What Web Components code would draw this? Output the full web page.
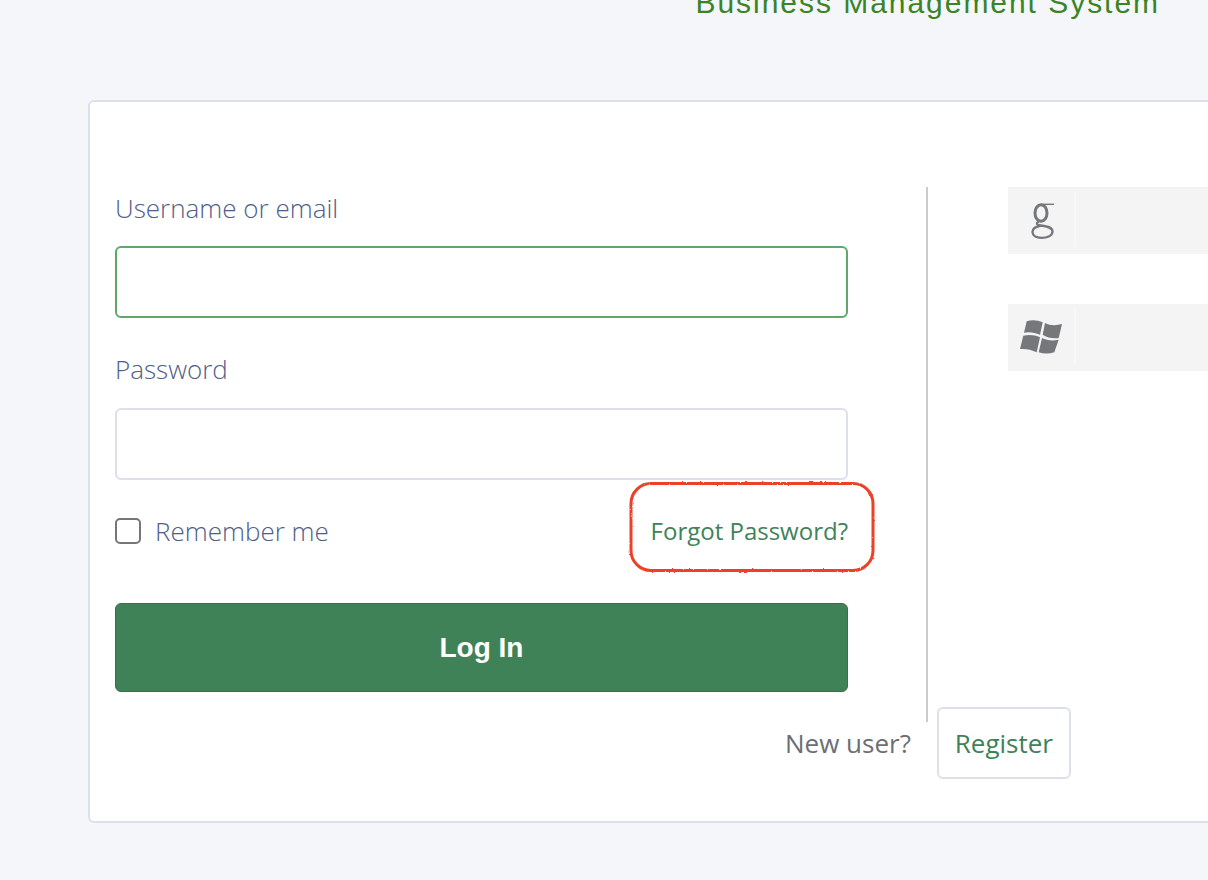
<!DOCTYPE html>
<html>
<head>
<meta charset="utf-8">
<title>Log in</title>
<style>
    html, body {
        margin: 0;
        height: 880px;
        overflow: hidden;
        background: #f4f6fa;
        font-family: "Open Sans", "Liberation Sans", sans-serif;
    }
</style>
</head>
<body>
<login-page>
    <login-card>
        <login-form slot="form"></login-form>
        <social-button slot="social" provider="google"></social-button>
        <social-button slot="social" provider="windows"></social-button>
        <register-prompt slot="footer"></register-prompt>
    </login-card>
</login-page>

<script>
function define(name, markup) {
    customElements.define(name, class extends HTMLElement {
        constructor() {
            super();
            this.attachShadow({ mode: 'open' });
            const template = document.createElement('template');
            template.innerHTML = typeof markup === 'function' ? markup(this) : markup;
            this.shadowRoot.appendChild(template.content.cloneNode(true));
        }
    });
}

define('login-page', `
    <style>
        :host { display: block; width: 1208px; height: 880px; overflow: hidden; }
        header {
            height: 100px;
            box-sizing: border-box;
            padding-right: 48px;
            text-align: right;
            font: 30px/30px "Liberation Sans", Arial, sans-serif;
            letter-spacing: 1.96px;
            color: #3a8425;
            margin-top: -12px;
            margin-bottom: 12px;
            white-space: nowrap;
        }
        main { padding-left: 88px; }
    </style>
    <header>Business Management System</header>
    <main><slot></slot></main>
`);

define('login-card', `
    <style>
        :host {
            display: block;
            width: 1300px;
            height: 723px;
            box-sizing: border-box;
            background: #fff;
            border: 2px solid #dde0ea;
            border-radius: 6px;
            padding: 85px 0 0 25px;
        }
        .columns { display: flex; height: 535px; }
        .form { flex: 0 0 733px; margin-right: 78px; }
        .social {
            flex: 1;
            border-left: 2px solid #cccccc;
            padding-left: 80px;
            display: flex;
            flex-direction: column;
            gap: 50px;
        }
        .footer { margin: -15px 0 0 0; }
    </style>
    <div class="columns">
        <div class="form"><slot name="form"></slot></div>
        <div class="social"><slot name="social"></slot></div>
    </div>
    <div class="footer"><slot name="footer"></slot></div>
`);

define('text-field', el => `
    <style>
        :host { display: block; margin-bottom: 31px; }
        label {
            display: block;
            font: 300 26px/43px "Open Sans", sans-serif;
            color: #4f6088;
            margin-bottom: 16px;
        }
        :host(:not([active])) label { margin-top: -1px; margin-bottom: 17px; }
        input {
            display: block;
            width: 100%;
            height: 72px;
            box-sizing: border-box;
            background: #fff;
            border: 2px solid ${el.hasAttribute('active') ? '#5fa86b' : '#dde0ea'};
            border-radius: 6px;
            outline: none;
        }
    </style>
    <label>${el.getAttribute('label')}</label>
    <input type="${el.getAttribute('type') || 'text'}">
`);

define('forgot-link', `
    <style>
        :host {
            display: block;
            position: relative;
            padding-top: 6px;
            font: 400 24px/30px "Open Sans", sans-serif;
            color: #3f8259;
        }
        svg { position: absolute; right: -29px; top: -30px; }
    </style>
    <slot></slot>
    <svg width="249" height="94" viewBox="0 0 249 94" fill="none">
        <filter id="rough" x="-5%" y="-5%" width="110%" height="110%">
            <feTurbulence type="fractalNoise" baseFrequency="0.35" numOctaves="2" seed="4"/>
            <feDisplacementMap in="SourceGraphic" scale="2.2"/>
        </filter>
        <rect x="3" y="3.500" width="242" height="87" rx="20" stroke="#ee4028" stroke-width="3" filter="url(#rough)"/>
    </svg>
`);

define('login-form', `
    <style>
        :host { display: block; }
        .options {
            display: flex;
            justify-content: space-between;
            align-items: center;
            height: 90px;
            margin-top: -28px;
            margin-bottom: 30px;
        }
        .remember {
            display: flex;
            align-items: center;
            gap: 14px;
            padding-top: 6px;
            font: 300 26px/30px "Open Sans", sans-serif;
            color: #4f6088;
        }
        input[type=checkbox] {
            appearance: none;
            margin: 0;
            width: 26px;
            height: 26px;
            box-sizing: border-box;
            border: 2px solid #767676;
            border-radius: 5px;
            background: #fff;
        }
        button {
            display: block;
            width: 100%;
            height: 89px;
            background: #408258;
            border: 1px solid #366f4b;
            border-radius: 6px;
            color: #fff;
            font: 700 28px "Liberation Sans", Arial, sans-serif;
        }
    </style>
    <text-field label="Username or email" active></text-field>
    <text-field label="Password" type="password"></text-field>
    <div class="options">
        <label class="remember"><input type="checkbox">Remember me</label>
        <forgot-link>Forgot Password?</forgot-link>
    </div>
    <button type="button">Log In</button>
`);

const socialIcons = {
    google: `<svg class="g" width="24" height="36" viewBox="0 0 24 36" fill="none" stroke="#75777b">
        <ellipse cx="10" cy="10" rx="6" ry="8.300" stroke-width="3"/>
        <path d="M10 1.300H23" stroke-width="1.400"/>
        <path d="M7.500 18.500C4.500 20.500 6 22 10 22.500C17 23.500 21.500 24.500 21.500 28.500C21.500 32.500 16.500 34.800 10.500 34.800C5 34.800 1.500 32.500 1.500 29C1.500 26 5 23.500 10 22.500" stroke-width="2.300"/>
    </svg>`,
    windows: `<svg width="43" height="35" viewBox="0 0 43 35" fill="#75777b">
        <path d="M6.700 1.300C12 -.5 18 .2 22.700 2.300L20 14.700C15 12.500 9 11.500 4 12.700Z"/>
        <path d="M25 3C30 5.700 36.500 5.700 42 4L38.700 18C33 19 27 17.500 22.700 14.700Z"/>
        <path d="M3.300 15.700C9 14.500 15 15 20 17.300L16.700 32.300C11.500 29.500 5.500 28.500 0 29Z"/>
        <path d="M22 18C27 20.700 33 21 38.700 19.700L34.300 32.300C29 34 23.500 34 18.700 32.300Z"/>
    </svg>`
};

define('social-button', el => `
    <style>
        :host { display: block; height: 67px; background: #f4f4f4; }
        .icon {
            box-sizing: border-box;
            width: 68px;
            height: 55px;
            position: relative;
            top: 5px;
            display: flex;
            align-items: center;
            justify-content: center;
            border-right: 2px solid #f8f8f8;
        }
        svg { margin-top: 2px; }
        svg.g { margin-left: 3px; }
    </style>
    <div class="icon">${socialIcons[el.getAttribute('provider')]}</div>
`);

define('register-prompt', `
    <style>
        :host {
            display: flex;
            align-items: center;
            height: 72px;
            padding-left: 670px;
            font: 400 26px "Open Sans", sans-serif;
        }
        .question { color: #6c6e75; }
        a {
            box-sizing: border-box;
            height: 72px;
            width: 134px;
            margin-left: 26px;
            display: flex;
            align-items: center;
            justify-content: center;
            border: 2px solid #dde0ea;
            border-radius: 6px;
            color: #3f8259;
            text-decoration: none;
        }
    </style>
    <span class="question">New user?</span>
    <a href="#">Register</a>
`);
</script>
</body>
</html>
